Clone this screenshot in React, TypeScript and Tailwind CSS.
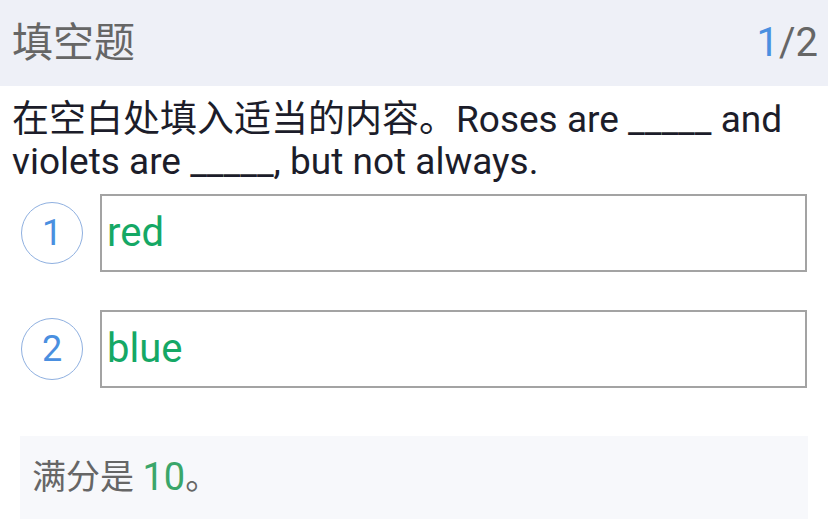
const font = "font-['Roboto','Noto_Sans_CJK_SC',sans-serif]";

type Blank = { n: number; answer: string };

const blanks: Blank[] = [
  { n: 1, answer: "red" },
  { n: 2, answer: "blue" },
];

export default function App() {
  return (
    <div className={`w-[828px] h-[528px] bg-white overflow-hidden ${font}`}>
      <header className="h-[86px] bg-[#eef0f7] flex items-center justify-between pl-3 pr-[10px]">
        <h1 className="text-[41px] text-[#666] leading-none">填空题</h1>
        <div className="text-[40px] leading-none">
          <span className="text-[#4a8fe0]">1</span>
          <span className="text-[#666]">/2</span>
        </div>
      </header>

      <p className="px-3 pt-[13px] text-[37px] leading-[42px] text-[#1c1d2a]">
        在空白处填入适当的内容。Roses are _____ and violets are _____, but not always.
      </p>

      <div className="flex flex-col gap-[38px] mt-[11px] px-[21px]">
        {blanks.map((b) => (
          <div key={b.n} className="flex items-center gap-[17px]">
            <div className="w-[62px] h-[62px] rounded-full border border-[#8fb0e0] flex items-center justify-center text-[36px] text-[#4a8fe0]">
              {b.n}
            </div>
            <div className="flex-1 h-[78px] border-2 border-[#a3a3a3] flex items-center pl-[5px] text-[40px] text-[#15a865]">
              {b.answer}
            </div>
          </div>
        ))}
      </div>

      <div className="mt-[48px] mx-5 h-[83px] bg-[#f7f8fb] flex items-center px-3 text-[34px] text-[#666]">
        满分是&nbsp;<span className="text-[38px] text-[#3aa66a]">10</span>。
      </div>
    </div>
  );
}
